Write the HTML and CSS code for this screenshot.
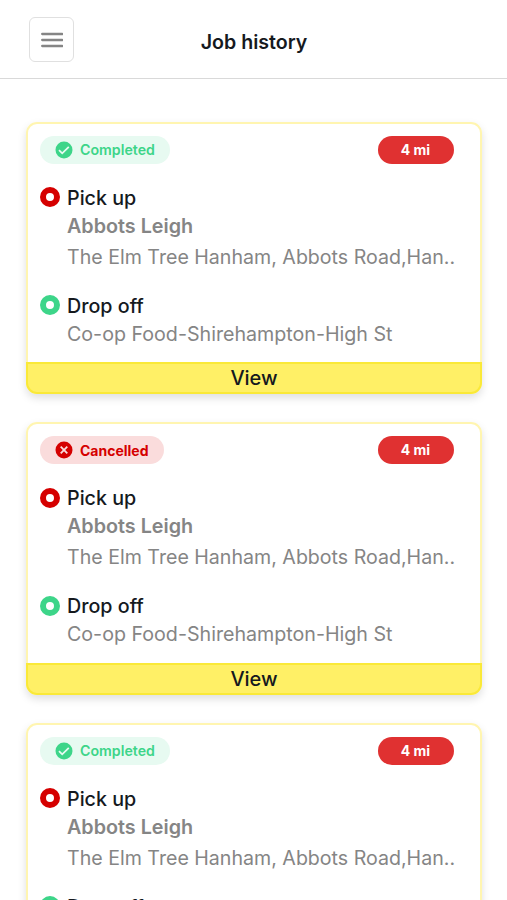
FILE: index.html
```html
<!DOCTYPE html>
<html lang="en"><head><meta charset="utf-8"><title>Job history</title><link rel="stylesheet" href="styles.css"></head>
<body>
<header class="topbar">
<button class="menu" aria-label="Menu"><svg width="22" height="16" viewBox="0 0 22 16"><path d="M1.2 2h20M1.2 8h20M1.2 14h20" stroke="#858585" stroke-width="2.3" stroke-linecap="round"/></svg></button>
<h1>Job history</h1>
</header>
<main class="jobs" id="jobs"></main>
<template id="job">
<article class="card">
<div class="head"><span class="status"><svg class="icon" width="18" height="18" viewBox="0 0 18 18"><circle cx="9" cy="9" r="8.5" fill="currentColor"/><path class="mark" fill="none" stroke-width="1.8"/></svg><span class="label"></span></span><span class="distance">4 mi</span></div>
<section class="stop pickup"><i class="dot"></i><div><h2>Pick up</h2><p class="area">Abbots Leigh</p><p class="address">The Elm Tree Hanham, Abbots Road,Han..</p></div></section>
<section class="stop dropoff"><i class="dot"></i><div><h2>Drop off</h2><p class="place">Co-op Food-Shirehampton-High St</p></div></section>
<button class="view">View</button>
</article>
</template>
<script src="script.js"></script>
</body></html>
```
FILE: script.js
```js
const marks = { Completed: 'M4 9.2l3.2 3.1 6.6-6.4', Cancelled: 'M5.7 5.7l6.6 6.6M12.3 5.7l-6.6 6.6' };
for (const status of ['Completed', 'Cancelled', 'Completed']) {
  const card = document.getElementById('job').content.cloneNode(true);
  card.querySelector('.status').classList.add(status.toLowerCase());
  card.querySelector('.label').textContent = status;
  card.querySelector('.mark').setAttribute('d', marks[status]);
  document.getElementById('jobs').append(card);
}
```
FILE: styles.css
```css
* { box-sizing: border-box; margin: 0; }
body { height: 900px; overflow: hidden; background: #fff; color: #15191e; font-family: Inter, sans-serif; }
button { font: inherit; color: inherit; padding: 0; }
.topbar { height: 79px; border-bottom: 1px solid #d9d9d9; display: grid; grid-template-columns: 74px 1fr 74px; align-items: center; padding-top: 1px; }
.menu { width: 45px; height: 45px; margin-left: 29px; border: 1.5px solid #e0e0e0; border-radius: 6px; background: #fff; display: grid; place-items: center; }
h1 { font-size: 19.6px; font-weight: 600; line-height: 24px; text-align: center; padding: 4px 0 0 1px; }
.jobs { padding: 42.6px 25px 0 26px; display: grid; gap: 28px; }
.card { height: 272.5px; border: 2px solid #fff5b0; border-radius: 11px; box-shadow: 0 4px 9px rgba(0,0,0,.13); display: flex; flex-direction: column; }
.head { display: flex; justify-content: space-between; padding: 12px 26.5px 0 12px; }
.status { height: 28px; width: 130px; border-radius: 14px; display: flex; align-items: center; gap: 7px; padding-left: 15px; font-size: 14.2px; font-weight: 600; }
.completed { color: #3dd589; background: #e7faf1; }
.completed .mark { stroke: #e7faf1; }
.cancelled { color: #d50000; background: #fadcdc; width: 124px; font-weight: 700; font-size: 14px; }
.cancelled .mark { stroke: #fadcdc; }
.distance { width: 76px; height: 28px; border-radius: 14px; background: #e03131; color: #fff; font-size: 14px; font-weight: 700; line-height: 28px; text-align: center; }
.stop { display: flex; gap: 7px; padding-left: 12px; font-size: 19.6px; white-space: nowrap; }
.pickup { margin-top: 20px; height: 108px; color: #d50000; }
.dropoff { color: #3dd589; }
.dot { width: 20px; height: 20px; margin-top: 3.6px; border: 6px solid; border-radius: 50%; }
h2 { font-size: 19.7px; font-weight: 500; line-height: 28px; color: #15191e; }
.area, .address, .place { color: #858585; line-height: 28px; }
.place { font-size: 19.65px; }
.area { font-weight: 600; font-size: 19.75px; }
.address { line-height: 34px; }
.view { height: 32px; margin: auto -2px -2px; border: 2px solid #fae938; border-radius: 0 0 11px 11px; background: #fff066; font-size: 20px; font-weight: 500; line-height: 28px; }
```
